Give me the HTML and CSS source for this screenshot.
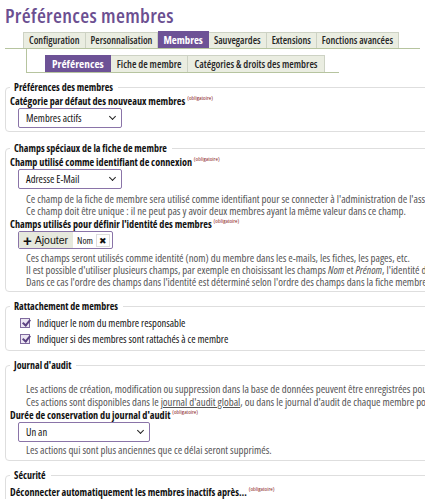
FILE: index.html
```html
<!doctype html>
<html lang="fr">
<head>
<meta charset="utf-8">
<title>Préférences membres</title>
<link rel="stylesheet" href="styles.css">
</head>
<body>
<h1 class="title">Préférences membres</h1>

<nav class="tabs">
	<ul class="tabs-main">
		<li><a href="#config">Configuration</a></li>
		<li><a href="#perso">Personnalisation</a></li>
		<li class="current"><a href="#membres">Membres</a></li>
		<li><a href="#sauvegardes">Sauvegardes</a></li>
		<li><a href="#extensions">Extensions</a></li>
		<li><a href="#avance">Fonctions avancées</a></li>
	</ul>
	<ul class="tabs-sub">
		<li class="current"><a href="#prefs">Préférences</a></li>
		<li><a href="#fiche">Fiche de membre</a></li>
		<li><a href="#categories">Catégories &amp; droits des membres</a></li>
	</ul>
</nav>

<form class="prefs">
	<fieldset>
		<legend>Préférences des membres</legend>
		<dl>
			<dt><label>Catégorie par défaut des nouveaux membres</label> <b class="req">(obligatoire)</b></dt>
			<dd><div class="select w-104">Membres actifs</div></dd>
		</dl>
	</fieldset>

	<fieldset class="spaced">
		<legend>Champs spéciaux de la fiche de membre</legend>
		<dl>
			<dt><label>Champ utilisé comme identifiant de connexion</label> <b class="req">(obligatoire)</b></dt>
			<dd><div class="select w-104">Adresse E-Mail</div></dd>
			<dd class="help">Ce champ de la fiche de membre sera utilisé comme identifiant pour se connecter à l'administration de l'association.<br>
			Ce champ doit être unique : il ne peut pas y avoir deux membres ayant la même valeur dans ce champ.</dd>
			<dt><label>Champs utilisés pour définir l'identité des membres</label> <b class="req">(obligatoire)</b></dt>
			<dd>
				<div class="multi">
					<span class="add"><b>+</b> Ajouter</span>
					<span class="chip">Nom <i class="del">✖</i></span>
				</div>
			</dd>
			<dd class="help help-3">Ces champs seront utilisés comme identité (nom) du membre dans les e-mails, les fiches, les pages, etc.<br>
			Il est possible d'utiliser plusieurs champs, par exemple en choisissant les champs <em>Nom</em> et <em>Prénom</em>, l'identité du membre sera alors « Nom Prénom ».<br>
			Dans ce cas l'ordre des champs dans l'identité est déterminé selon l'ordre des champs dans la fiche membre.</dd>
		</dl>
	</fieldset>

	<fieldset>
		<legend>Rattachement de membres</legend>
		<dl class="checks">
			<dd class="check"><span class="box"></span> Indiquer le nom du membre responsable</dd>
			<dd class="check"><span class="box"></span> Indiquer si des membres sont rattachés à ce membre</dd>
		</dl>
	</fieldset>

	<fieldset>
		<legend>Journal d'audit</legend>
		<p class="help intro">Les actions de création, modification ou suppression dans la base de données peuvent être enregistrées pour chaque membre.<br>
		Ces actions sont disponibles dans le <a href="#audit">journal d'audit global</a>, ou dans le journal d'audit de chaque membre pour ses propres actions.</p>
		<dl>
			<dt><label>Durée de conservation du journal d'audit</label> <b class="req">(obligatoire)</b></dt>
			<dd><div class="select w-132">Un an</div></dd>
			<dd class="help help-1">Les actions qui sont plus anciennes que ce délai seront supprimés.</dd>
		</dl>
	</fieldset>

	<fieldset>
		<legend>Sécurité</legend>
		<dl>
			<dt class="first"><label>Déconnecter automatiquement les membres inactifs après…</label> <b class="req">(obligatoire)</b></dt>
			<dd><div class="select w-152">2 heures</div></dd>
		</dl>
	</fieldset>
</form>
</body>
</html>
```

FILE: styles.css
```css
html{overflow:hidden;}
body{margin:0;padding:0 5px;background:#fff;color:#111;font-family:"Open Sans","Liberation Sans",sans-serif;font-stretch:75%;font-size:10px;}

.title{margin:0;padding-top:4px;height:28px;font-family:"Open Sans","Noto Sans",sans-serif;font-weight:600;font-size:20.5px;line-height:22px;color:#6b4f91;letter-spacing:0.3px;white-space:nowrap;}

.tabs ul{margin:0;padding:0;list-style:none;display:flex;white-space:nowrap;}
.tabs li{flex-shrink:0;}
.tabs li a{display:block;text-decoration:none;color:#262626;font-weight:600;font-size:10.1px;line-height:15px;padding:0 5px;background:#eaede1;border:1px solid #cdd2c4;border-bottom:none;}
.tabs li + li a{border-left:none;}
.tabs li.current a{background:#6d5296;border-color:#6d5296;color:#fff;font-weight:700;font-size:10.8px;}
.tabs-main{padding-left:18px !important;border-bottom:1px solid #b6c49f;width:397px;}
.tabs-main li.current a{margin-top:-1px;line-height:16px;}
.tabs-sub{margin-left:21px !important;padding:6px 0 0 18px !important;border-left:1px solid #b6c49f;border-bottom:1px solid #b6c49f;width:294px;}
.tabs-sub li a{line-height:16px;font-size:10.3px;padding:0 6px;}
.tabs-sub li.current a{font-size:11.3px;}

.prefs{margin-top:7px;width:600px;}
fieldset{margin:0 0 7px;padding:0 4px 3px;border:1px solid #dedede;border-radius:4px;}
fieldset.spaced{margin-top:9px;}
legend{padding:0 5px 0 4px;margin:0;font-weight:700;font-size:10px;line-height:14px;}
dl{margin:0;}
dt{margin:1px 0 0;font-weight:700;font-size:10.2px;line-height:13px;white-space:nowrap;}
dt.first{margin-top:4px;}
dd{margin:0 0 0 8px;}
.req{font-weight:400;font-size:6px;line-height:0;color:#8a1c1c;vertical-align:5px;}
.help{margin-left:16px;color:#555;font-size:10.8px;line-height:12px;padding:4px 0 0;white-space:nowrap;}
.help-3{padding:3px 0 0;}
.help-1{padding:2px 0 1px;}
.help em{font-style:italic;}
.help a{color:#555;}
.intro{margin:10px 0 0 16px;padding:0;line-height:13px;}

.select{box-sizing:border-box;height:20px;margin:0;padding:0 18px 0 7px;border:1px solid #8a74a8;border-radius:2px;line-height:18px;font-size:10.5px;position:relative;background:#fff;white-space:nowrap;}
.select::after{content:"";position:absolute;right:6px;top:5px;width:4px;height:4px;border-right:1.5px solid #222;border-bottom:1.5px solid #222;transform:rotate(45deg);}
.w-104{width:104px;}
.w-132{width:132px;}
.w-152{width:152px;}

.multi{box-sizing:border-box;display:inline-flex;align-items:center;margin:0;border:1px solid #8a74a8;border-radius:2px;height:18px;padding:0;vertical-align:top;}
.add{display:flex;align-items:center;height:100%;padding:0 5px 0 4px;background:#e6e9dd;font-family:"Liberation Sans",Arial,sans-serif;font-stretch:100%;font-size:10.5px;}
.add b{font-size:15px;margin-right:3px;line-height:1;}
.chip{display:flex;align-items:center;padding:0 2px 0 4px;font-size:9.5px;}
.del{font-style:normal;font-size:8.5px;margin-left:3px;padding:0 2px;border:1px solid #ddd;background:#fff;line-height:11px;}

.checks{padding:2px 0 0;}
.check{display:flex;align-items:center;margin:0 0 0 10px;font-size:10.5px;line-height:16px;}
.box{display:inline-block;width:8px;height:8px;margin-right:7px;border:1px solid #7f6a9e;background:#ece6f3;position:relative;}
.box::after{content:"";position:absolute;left:2.5px;top:-1px;width:3px;height:6px;border-right:2px solid #5c4382;border-bottom:2px solid #5c4382;transform:rotate(40deg);}
```
